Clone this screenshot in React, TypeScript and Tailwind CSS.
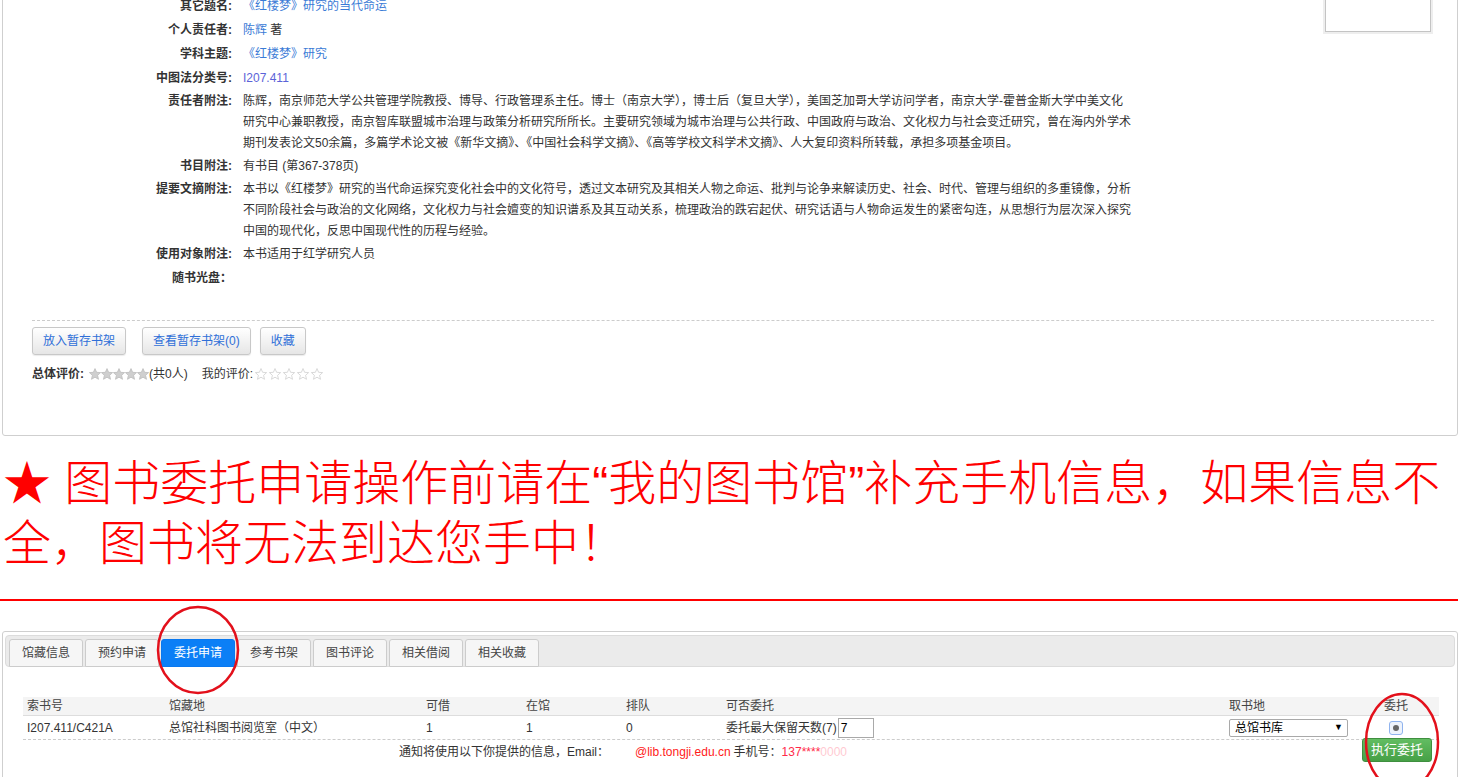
import React from 'react';

const LINK = 'text-[#3b7bd6]';

type Row = { label: string; lines: React.ReactNode[] };

const rows: Row[] = [
  { label: '其它题名:', lines: [<span className={LINK}>《红楼梦》研究的当代命运</span>] },
  { label: '个人责任者:', lines: [<><span className={LINK}>陈辉</span> 著</>] },
  { label: '学科主题:', lines: [<span className={LINK}>《红楼梦》研究</span>] },
  { label: '中图法分类号:', lines: [<span className="text-[#5b63d8]">I207.411</span>] },
  {
    label: '责任者附注:',
    lines: [
      '陈辉，南京师范大学公共管理学院教授、博导、行政管理系主任。博士（南京大学），博士后（复旦大学），美国芝加哥大学访问学者，南京大学-霍普金斯大学中美文化',
      '研究中心兼职教授，南京智库联盟城市治理与政策分析研究所所长。主要研究领域为城市治理与公共行政、中国政府与政治、文化权力与社会变迁研究，曾在海内外学术',
      '期刊发表论文50余篇，多篇学术论文被《新华文摘》、《中国社会科学文摘》、《高等学校文科学术文摘》、人大复印资料所转载，承担多项基金项目。',
    ],
  },
  { label: '书目附注:', lines: ['有书目 (第367-378页)'] },
  {
    label: '提要文摘附注:',
    lines: [
      '本书以《红楼梦》研究的当代命运探究变化社会中的文化符号，透过文本研究及其相关人物之命运、批判与论争来解读历史、社会、时代、管理与组织的多重镜像，分析',
      '不同阶段社会与政治的文化网络，文化权力与社会嬗变的知识谱系及其互动关系，梳理政治的跌宕起伏、研究话语与人物命运发生的紧密勾连，从思想行为层次深入探究',
      '中国的现代化，反思中国现代性的历程与经验。',
    ],
  },
  { label: '使用对象附注:', lines: ['本书适用于红学研究人员'] },
  { label: '随书光盘：', lines: [''] },
];

const tabs = ['馆藏信息', '预约申请', '委托申请', '参考书架', '图书评论', '相关借阅', '相关收藏'];

function Star({ filled }: { filled: boolean }) {
  return (
    <svg width="12" height="12" viewBox="0 0 12 12" className="shrink-0">
      <polygon
        points="6,0.6 7.6,4.3 11.6,4.6 8.6,7.3 9.5,11.3 6,9.2 2.5,11.3 3.4,7.3 0.4,4.6 4.4,4.3"
        fill={filled ? '#cfcfcf' : 'none'}
        stroke={filled ? '#bdbdbd' : '#cfcfcf'}
        strokeWidth="0.8"
      />
    </svg>
  );
}

function Btn({ children }: { children: React.ReactNode }) {
  return (
    <button className="h-[28px] px-[10px] rounded-[3px] border border-[#c8c8c8] bg-gradient-to-b from-white to-[#e6e6e6] text-[12px] text-[#2f6fd8] shadow-[0_1px_1px_rgba(0,0,0,0.08)]">
      {children}
    </button>
  );
}

export default function App() {
  return (
    <div className="relative flex flex-col min-h-[820px] bg-white text-[#333] font-['Liberation_Sans','Noto_Sans_CJK_SC',sans-serif] text-[12px] overflow-hidden">
      {/* Book detail panel (top cut off by scroll) */}
      <div className="-mt-[40px] ml-[2px] mr-[4px] border border-[#cfcfcf] rounded-[3px] pt-[33px] pb-[53px]">
        <div className="flex">
          <div className="flex-1">
            {rows.map((r) => (
              <div
                key={r.label}
                className={`flex leading-[21px] ${r.lines.length > 1 ? 'py-[0.5px]' : 'py-[1.5px]'}`}
              >
                <div className="w-[229px] shrink-0 text-right font-bold">{r.label}</div>
                <div className="ml-[11px]">
                  {r.lines.map((l, i) => (
                    <div key={i} className="whitespace-nowrap min-h-[21px]">{l}</div>
                  ))}
                </div>
              </div>
            ))}
          </div>
          <div className="w-[106px] h-[38px] mr-[26px] border border-[#c4c4c4] shadow-[0_0_0_2px_#eee]" />
        </div>

        <div className="ml-[29px] mr-[23px] mt-[30px] border-t border-dashed border-[#cccccc]" />
        <div className="ml-[29px] mt-[6px] flex">
          <Btn>放入暂存书架</Btn>
          <div className="ml-[16px]"><Btn>查看暂存书架(0)</Btn></div>
          <div className="ml-[9px]"><Btn>收藏</Btn></div>
        </div>
        <div className="ml-[29px] mt-[11px] flex items-center leading-[16px]">
          <span className="font-bold">总体评价:</span>
          <span className="ml-[5px] flex gap-0">
            {[0, 1, 2, 3, 4].map((i) => <Star key={i} filled />)}
          </span>
          <span>(共0人)</span>
          <span className="ml-[14px]">我的评价:</span>
          <span className="ml-[2px] flex gap-[2px]">
            {[0, 1, 2, 3, 4].map((i) => <Star key={i} filled={false} />)}
          </span>
        </div>
      </div>

      {/* Red notice */}
      <div className="mt-[18px] mr-[4px] pl-[3px] text-[#ff0000] text-[48px] font-light leading-[60px] font-['Liberation_Sans','Noto_Sans_CJK_SC',sans-serif]">
        ★ 图书委托申请操作前请在“我的图书馆”补充手机信息，如果信息不全，图书将无法到达您手中！
      </div>
      <div className="mt-[25px] mr-[4px] h-[2px] bg-[#ff0000]" />

      {/* Holdings / tabs panel */}
      <div className="mt-[30px] ml-[2px] mr-[4px] border border-[#cfcfcf] rounded-[3px] pb-[60px]">
        <div className="mx-[2px] mt-[3px] h-[32px] rounded-[4px] border border-[#dcdcdc] bg-[#ebebeb] pl-[3px] pt-[3px] flex gap-[2px]">
          {tabs.map((t) => (
            <div
              key={t}
              className={
                t === '委托申请'
                  ? 'h-[28px] px-[12px] flex items-center rounded-t-[3px] border border-[#0a78ef] bg-[#0b7ff6] text-white'
                  : 'h-[28px] px-[12px] flex items-center rounded-t-[3px] border border-[#cccccc] bg-[#f6f6f6] text-[#444]'
              }
            >
              {t}
            </div>
          ))}
        </div>

        <div className="ml-[20px] mr-[18px] mt-[30px]">
          <div className="grid grid-cols-[142px_257px_100px_100px_100px_503px_155px_1fr] h-[19px] items-center bg-[#f4f4f4] border-b border-[#dddddd] text-[#444]">
            <div className="pl-[4px]">索书号</div>
            <div className="pl-[4px]">馆藏地</div>
            <div className="pl-[4px]">可借</div>
            <div className="pl-[4px]">在馆</div>
            <div className="pl-[4px]">排队</div>
            <div className="pl-[4px]">可否委托</div>
            <div className="pl-[4px]">取书地</div>
            <div className="pl-[4px]">委托</div>
          </div>
          <div className="grid grid-cols-[142px_257px_100px_100px_100px_503px_155px_1fr] h-[24px] items-center border-b border-dashed border-[#cccccc]">
            <div className="pl-[4px]">I207.411/C421A</div>
            <div className="pl-[4px]">总馆社科图书阅览室（中文）</div>
            <div className="pl-[4px]">1</div>
            <div className="pl-[4px]">1</div>
            <div className="pl-[4px]">0</div>
            <div className="pl-[4px] flex items-center">
              <span>委托最大保留天数(7)</span>
              <span className="ml-[1px] w-[36px] h-[20px] border border-[#a9a9a9] leading-[18px] pl-[2px] text-black">7</span>
            </div>
            <div className="pl-[4px]">
              <div className="w-[119px] h-[18px] border border-[#a9a9a9] rounded-[2px] flex items-center pl-[5px] pr-[4px] text-black">
                <span>总馆书库</span>
                <span className="ml-auto text-[9px]">▼</span>
              </div>
            </div>
            <div className="pl-[9px]">
              <div className="w-[14px] h-[14px] rounded-[3px] border border-[#8fb3ee] bg-[#eef3fb] flex items-center justify-center">
                <div className="w-[6px] h-[6px] rounded-full bg-[#666]" />
              </div>
            </div>
          </div>
          <div className="flex items-center h-[24px]">
            <span className="ml-[376px]">通知将使用以下你提供的信息，Email：</span>
            <span className="ml-[26px] text-[#ff1a1a]">@lib.tongji.edu.cn</span>
            <span className="ml-[3px]">手机号：</span>
            <span className="text-[#ff2a4a]">137****<span className="opacity-25">0000</span></span>
            <button className="ml-auto mr-[7px] -mt-[4px] h-[24px] w-[70px] rounded-[3px] border border-[#3f8f3f] bg-gradient-to-b from-[#62bd62] to-[#46a046] text-white text-[13px]">
              执行委托
            </button>
          </div>
        </div>
      </div>

      {/* annotation ellipses */}
      <svg className="absolute left-0 top-0 pointer-events-none" width="1462" height="820">
        <ellipse cx="198" cy="650" rx="40" ry="43" fill="none" stroke="#e3101b" strokeWidth="2.5" />
        <ellipse cx="1402" cy="742" rx="36" ry="48" fill="none" stroke="#e3101b" strokeWidth="2.5" />
      </svg>
    </div>
  );
}
